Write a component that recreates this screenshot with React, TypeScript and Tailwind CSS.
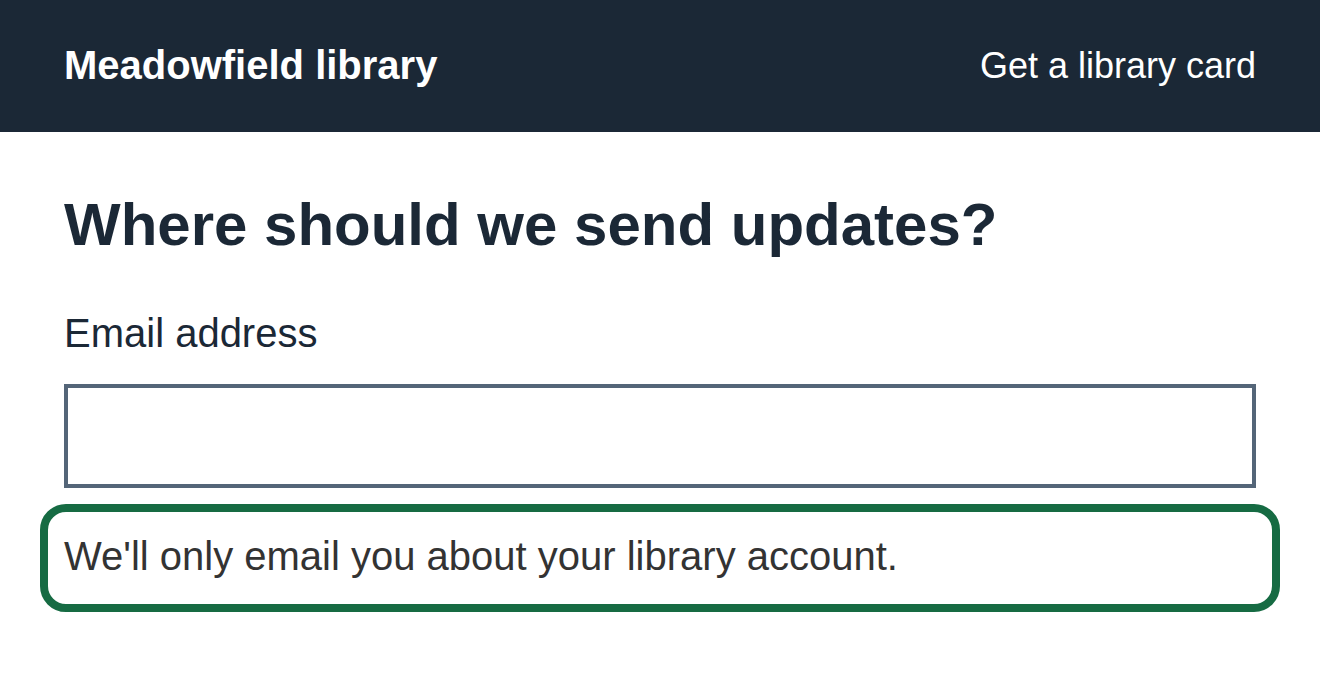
import React from "react";

export default function App() {
  return (
    <div className="min-h-screen bg-white" style={{ fontFamily: '"Liberation Sans", Arial, sans-serif' }}>
      <header className="h-[132px] bg-[#1b2836] px-16 flex items-center justify-between">
        <a className="mb-[3px] text-[40px] leading-[60px] font-bold text-white">Meadowfield library</a>
        <a className="text-[36px] leading-[54px] text-white">Get a library card</a>
      </header>
      <main className="px-16 pt-[57px]">
        <h1 className="text-[60px] leading-[72px] font-bold text-[#1b2836]">Where should we send updates?</h1>
        <label htmlFor="email" className="block mt-[42px] text-[40px] leading-[60px] text-[#1b2836]">
          Email address
        </label>
        <input
          id="email"
          type="email"
          className="block mt-[21px] w-full h-[104px] border-4 border-[#546578] bg-white outline-none"
        />
        <div className="-mx-6 mt-4 border-8 border-[#166b43] rounded-[26px] px-4 pt-[14px] pb-[18px]">
          <p className="text-[40px] leading-[60px] text-[#333333]">We'll only email you about your library account.</p>
        </div>
      </main>
    </div>
  );
}
